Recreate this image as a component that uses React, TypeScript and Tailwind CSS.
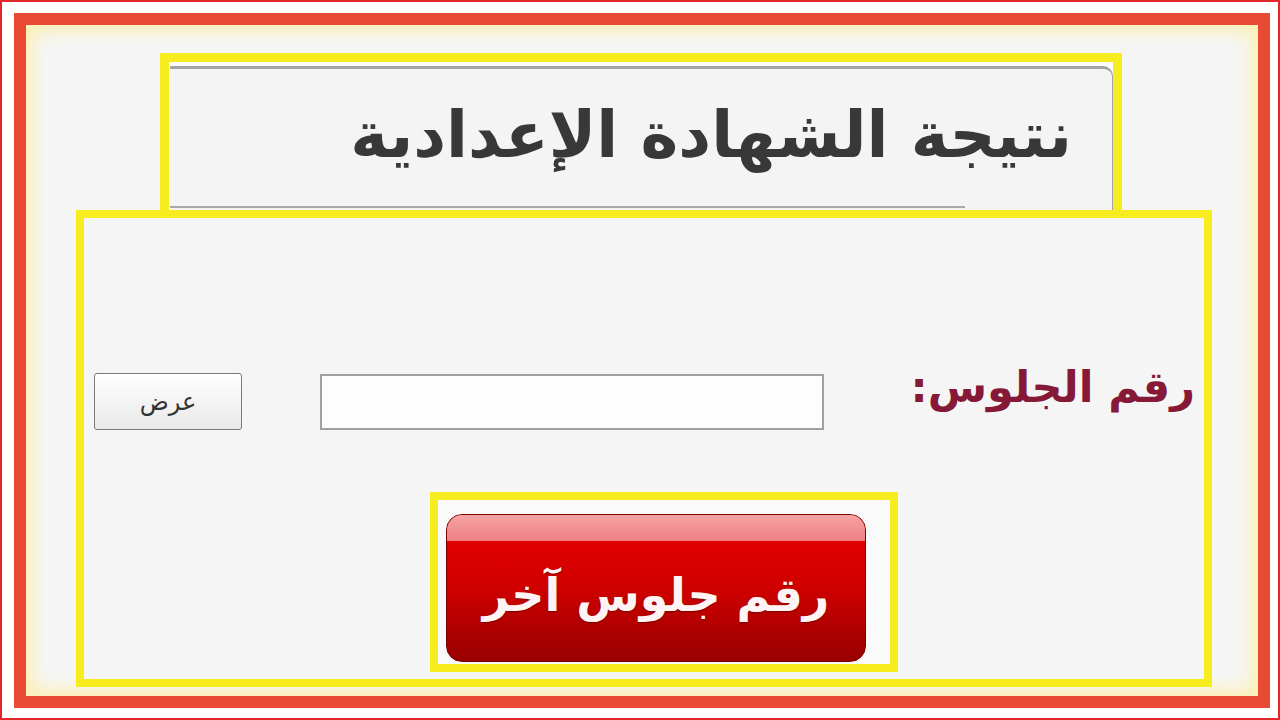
export default function App() {
  const font = { fontFamily: '"DejaVu Sans", sans-serif' };
  return (
    <div className="w-[1280px] h-[720px] bg-white border-2 border-[#e3262a] pl-[12px] pr-[8px] pt-[11px] pb-[10px]" style={font}>
      <div className="h-full border-[12px] border-[#e84a33] bg-[#f5f5f5] shadow-[inset_0_0_18px_6px_#fdf0b0] flex flex-col">
        {/* Title */}
        <div className="mt-[28px] ml-[134px] w-[962px] h-[157px] border-[9px] border-b-0 border-[#f7ec1d] bg-[#fbfbfb] pt-[4px] flex flex-col">
          <div className="flex-1 ml-[1px] border-t-[3px] border-r border-[#a3a3a3] rounded-tr-[10px] bg-[#f4f4f4] flex items-center justify-end pr-[40px] relative">
            <h1 dir="rtl" className="text-[64px] font-bold text-[#383838] leading-none -mt-[10px]">
              نتيجة الشهادة الإعدادية
            </h1>
            <div className="absolute left-0 bottom-[2px] w-[795px] h-[2px] bg-[#a8a8a8]" />
          </div>
        </div>

        {/* Main box */}
        <div className="ml-[50px] w-[1136px] flex-1 mb-[9px] border-[8px] border-[#f7ec1d] bg-[#f5f5f5] flex flex-col">
          <div className="mt-[155px] flex items-center">
            <button className="ml-[10px] w-[148px] h-[57px] rounded-[3px] border border-[#7a7a7a] bg-gradient-to-b from-white to-[#e9e9e9] text-[24px] text-[#333]">
              عرض
            </button>
            <div className="ml-[78px] w-[504px] h-[56px] border-2 border-[#a0a0a0] bg-[#fdfdfd]" />
            <div className="flex-1 flex justify-end pr-[9px] -mt-[28px]">
              <span dir="rtl" className="text-[43px] font-bold text-[#861838]">
                رقم الجلوس:
              </span>
            </div>
          </div>

          <div className="mt-[62px] ml-[346px] w-[468px] h-[180px] border-[8px] border-[#f7ec1d] bg-[#fafafa] pt-[14px] pl-[8px] pr-[24px]">
            <button className="w-full h-[148px] rounded-[16px] border border-[#7a0000] overflow-hidden flex flex-col bg-gradient-to-b from-[#ea0000] via-[#d00000] to-[#980000]">
              <div className="h-[26px] w-full bg-gradient-to-b from-[#f6a3a3] to-[#ee7f84]" />
              <div className="flex-1 w-full flex items-center justify-center pb-[12px]">
                <span dir="rtl" className="text-[46px] font-bold text-[#fff3f3] [text-shadow:0_1px_2px_#700]">
                  رقم جلوس آخر
                </span>
              </div>
            </button>
          </div>
        </div>
      </div>
    </div>
  );
}
